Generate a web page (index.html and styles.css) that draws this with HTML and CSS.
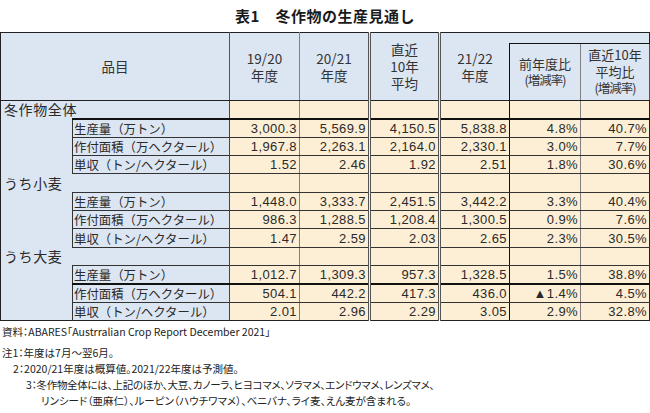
FILE: index.html
```html
<!DOCTYPE html>
<html lang="ja">
<head>
<meta charset="utf-8">
<title>表1 冬作物の生産見通し</title>
<link rel="stylesheet" href="styles.css">
</head>
<body>
<div class="page">
  <h1 class="title">表1　冬作物の生産見通し</h1>
  <table class="tbl">
    <colgroup>
      <col class="c-indent"><col class="c-item">
      <col class="c-num"><col class="c-num"><col class="c-num"><col class="c-num"><col class="c-num2"><col class="c-num3">
    </colgroup>
    <thead>
      <tr class="h1">
        <th colspan="2" rowspan="2" class="hd">品目</th>
        <th rowspan="2" class="hd v-gray">19/20<br>年度</th>
        <th rowspan="2" class="hd v-dbl">20/21<br>年度</th>
        <th rowspan="2" class="hd v-dbl">直近<br>10年<br>平均</th>
        <th rowspan="2" class="hd v-none">21/22<br>年度</th>
        <th colspan="2" class="hd strip"></th>
      </tr>
      <tr class="h2">
        <th class="hd v-gray l-black sm">前年度比<br><span class="paren">(増減率)</span></th>
        <th class="hd sm">直近10年<br>平均比<br><span class="paren">(増減率)</span></th>
      </tr>
    </thead>
    <tbody>
      <tr class="grp">
        <td colspan="2" class="glabel">冬作物全体</td>
        <td class="n v-gray"></td><td class="n v-dbl"></td><td class="n v-dbl"></td><td class="n v-black"></td><td class="n v-gray"></td><td class="n"></td>
      </tr>
      <tr class="thick">
        <td rowspan="3" class="indent"></td>
        <td class="item">生産量（万トン）</td>
        <td class="n v-gray">3,000.3</td><td class="n v-dbl">5,569.9</td><td class="n v-dbl">4,150.5</td><td class="n v-black">5,838.8</td><td class="n v-gray">4.8%</td><td class="n">40.7%</td>
      </tr>
      <tr>
        <td class="item">作付面積（万ヘクタール）</td>
        <td class="n v-gray">1,967.8</td><td class="n v-dbl">2,263.1</td><td class="n v-dbl">2,164.0</td><td class="n v-black">2,330.1</td><td class="n v-gray">3.0%</td><td class="n">7.7%</td>
      </tr>
      <tr>
        <td class="item">単収（トン/ヘクタール）</td>
        <td class="n v-gray">1.52</td><td class="n v-dbl">2.46</td><td class="n v-dbl">1.92</td><td class="n v-black">2.51</td><td class="n v-gray">1.8%</td><td class="n">30.6%</td>
      </tr>

      <tr class="grp">
        <td colspan="2" class="glabel">うち小麦</td>
        <td class="n v-gray"></td><td class="n v-dbl"></td><td class="n v-dbl"></td><td class="n v-black"></td><td class="n v-gray"></td><td class="n"></td>
      </tr>
      <tr>
        <td rowspan="3" class="indent"></td>
        <td class="item">生産量（万トン）</td>
        <td class="n v-gray">1,448.0</td><td class="n v-dbl">3,333.7</td><td class="n v-dbl">2,451.5</td><td class="n v-black">3,442.2</td><td class="n v-gray">3.3%</td><td class="n">40.4%</td>
      </tr>
      <tr>
        <td class="item">作付面積（万ヘクタール）</td>
        <td class="n v-gray">986.3</td><td class="n v-dbl">1,288.5</td><td class="n v-dbl">1,208.4</td><td class="n v-black">1,300.5</td><td class="n v-gray">0.9%</td><td class="n">7.6%</td>
      </tr>
      <tr>
        <td class="item">単収（トン/ヘクタール）</td>
        <td class="n v-gray">1.47</td><td class="n v-dbl">2.59</td><td class="n v-dbl">2.03</td><td class="n v-black">2.65</td><td class="n v-gray">2.3%</td><td class="n">30.5%</td>
      </tr>

      <tr class="grp">
        <td colspan="2" class="glabel">うち大麦</td>
        <td class="n v-gray"></td><td class="n v-dbl"></td><td class="n v-dbl"></td><td class="n v-black"></td><td class="n v-gray"></td><td class="n"></td>
      </tr>
      <tr>
        <td rowspan="3" class="indent"></td>
        <td class="item">生産量（万トン）</td>
        <td class="n v-gray">1,012.7</td><td class="n v-dbl">1,309.3</td><td class="n v-dbl">957.3</td><td class="n v-black">1,328.5</td><td class="n v-gray">1.5%</td><td class="n">38.8%</td>
      </tr>
      <tr class="thick">
        <td class="item">作付面積（万ヘクタール）</td>
        <td class="n v-gray">504.1</td><td class="n v-dbl">442.2</td><td class="n v-dbl">417.3</td><td class="n v-black">436.0</td><td class="n v-gray">▲1.4%</td><td class="n">4.5%</td>
      </tr>
      <tr class="last">
        <td class="item">単収（トン/ヘクタール）</td>
        <td class="n v-gray">2.01</td><td class="n v-dbl">2.96</td><td class="n v-dbl">2.29</td><td class="n v-black">3.05</td><td class="n v-gray">2.9%</td><td class="n">32.8%</td>
      </tr>
    </tbody>
  </table>

  <div class="notes">
    <p class="src">資料：ABARES「Austrralian Crop Report December 2021」</p>
    <p class="n1">注1：年度は7月～翌6月。</p>
    <p class="n2">2：2020/21年度は概算値。2021/22年度は予測値。</p>
    <p class="n3">3：冬作物全体には、上記のほか、大豆、カノーラ、ヒヨコマメ、ソラマメ、エンドウマメ、レンズマメ、</p>
    <p class="n4">リンシード（亜麻仁）、ルーピン（ハウチワマメ）、ベニバナ、ライ麦、えん麦が含まれる。</p>
  </div>
</div>
</body>
</html>
```
FILE: styles.css
```css
html, body {
  margin: 0;
  padding: 0;
  background: #ffffff;
}
body {
  font-family: "Noto Sans CJK JP", "Noto Sans", sans-serif;
  color: #1a1a1a;
}
.page {
  width: 650px;
}
.title {
  margin: 0;
  height: 32px;
  line-height: 32px;
  font-size: 15px;
  font-weight: bold;
  text-align: center;
  letter-spacing: 0.5px;
}
.tbl {
  border-collapse: collapse;
  table-layout: fixed;
  width: 649px;
  border: 1px solid #222;
}
.c-indent { width: 72px; }
.c-item { width: 157px; }
.c-num { width: 70px; }
.c-num2 { width: 71px; }
.c-num3 { width: 69px; }

.hd {
  background: #dce6f2;
  font-weight: normal;
  font-size: 13.5px;
  line-height: 17px;
  color: #333;
  padding: 0;
  border-right: 1px solid #555;
  border-bottom: 1px solid #222;
  vertical-align: middle;
}
.hd.sm { font-size: 13px; line-height: 16.5px; }
.paren { font-size: 12.5px; letter-spacing: -1px; }
.h1 { height: 11px; }
.h2 { height: 57px; }
.strip { border-bottom: 1px solid #111; border-right: 1px solid #222; }
.v-gray { border-right: 1px solid #808080; }
.v-dbl { border-right: 3px double #555; }
.v-none { border-right: none; }
.v-black { border-right: 1px solid #111; }
.l-black { border-left: 1px solid #111; }

tbody tr { height: 18.33px; }
tbody td {
  padding: 0;
  font-size: 13px;
  line-height: 14px;
  white-space: nowrap;
  overflow: visible;
}
.glabel {
  background: #dce6f2;
  font-size: 14px;
  letter-spacing: 0.6px;
  padding-left: 3px;
  vertical-align: middle;
  border-right: 1px solid #444;
  border-bottom: none;
  color: #2a2a2a;
}
.indent {
  background: #dce6f2;
  border-right: 1px solid #333;
}
.item {
  background: #dce6f2;
  font-size: 12.4px;
  padding-left: 1px;
  vertical-align: bottom;
  padding-bottom: 1px;
  border-top: 1px solid #333;
  border-bottom: 1px solid #333;
  border-right: 1px solid #444;
  color: #2a2a2a;
}
.n {
  background: #fdefd6;
  font-family: "Liberation Sans", Arial, sans-serif;
  font-size: 13px;
  letter-spacing: 0.4px;
  text-align: right;
  padding-right: 2px;
  vertical-align: bottom;
  padding-bottom: 1px;
  color: #2a2a2a;
  border-top: 1px solid #333;
  border-bottom: 1px solid #333;
}
tr.thick td { border-top: 2px solid #111; }
tr.thick td.indent { border-top: none; }
tr.last td { border-bottom: 1px solid #222; }

.notes {
  font-size: 10.5px;
  line-height: 16px;
  color: #222;
  font-feature-settings: "palt";
  padding-top: 3px;
}
.notes p {
  margin: 0;
  white-space: nowrap;
}
.src { padding-left: 2px; margin-bottom: 5px !important; }
.n1 { padding-left: 2px; }
.n2 { padding-left: 13px; }
.n3 { padding-left: 26px; letter-spacing: -0.3px; }
.n4 { padding-left: 41px; }
```
